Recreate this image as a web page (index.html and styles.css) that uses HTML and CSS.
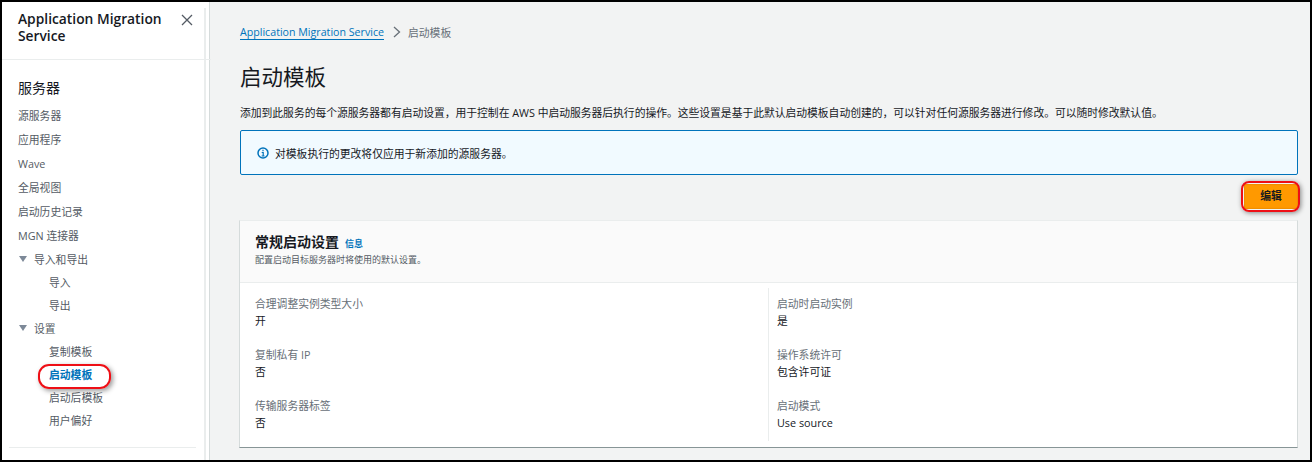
FILE: index.html
```html
<!DOCTYPE html>
<html lang="zh">
<head>
<meta charset="utf-8">
<title>启动模板</title>
<link rel="stylesheet" href="styles.css">
</head>
<body>
<div class="frame">
  <aside class="sidebar">
    <div class="side-inner">
      <header class="side-head">
        <h2 class="service">Application Migration Service</h2>
        <svg class="close" viewBox="0 0 12 12" width="12" height="12"><path d="M1 1l10 10M11 1L1 11" fill="none" stroke="#545b64" stroke-width="1.3"/></svg>
      </header>
      <nav class="nav">
        <h3 class="nav-title">服务器</h3>
        <a class="nav-item">源服务器</a>
        <a class="nav-item">应用程序</a>
        <a class="nav-item">Wave</a>
        <a class="nav-item">全局视图</a>
        <a class="nav-item">启动历史记录</a>
        <a class="nav-item">MGN 连接器</a>
        <div class="nav-group"><span class="caret"></span>导入和导出</div>
        <a class="nav-sub">导入</a>
        <a class="nav-sub">导出</a>
        <div class="nav-group"><span class="caret"></span>设置</div>
        <a class="nav-sub">复制模板</a>
        <a class="nav-sub active">启动模板</a>
        <a class="nav-sub">启动后模板</a>
        <a class="nav-sub">用户偏好</a>
      </nav>
      <div class="side-rule"></div>
    </div>
    <div class="side-track"></div>
  </aside>
  <main class="main">
    <div class="crumbs">
      <a class="crumb-link">Application Migration Service</a>
      <svg class="crumb-sep" viewBox="0 0 8 12" width="8" height="12"><path d="M1 1l5.5 5L1 11" fill="none" stroke="#687078" stroke-width="1.3"/></svg>
      <span class="crumb-current">启动模板</span>
    </div>
    <h1 class="page-title">启动模板</h1>
    <p class="lead">添加到此服务的每个源服务器都有启动设置，用于控制在 AWS 中启动服务器后执行的操作。这些设置是基于此默认启动模板自动创建的，可以针对任何源服务器进行修改。可以随时修改默认值。</p>
    <div class="alert">
      <svg class="alert-icon" viewBox="0 0 12 12" width="12" height="12"><circle cx="6" cy="6" r="5" fill="none" stroke="#0073bb" stroke-width="1.5"/><path d="M6 2.7v1.6M4.7 5.5H6.2V9M4.6 9h3" fill="none" stroke="#0073bb" stroke-width="1.2"/></svg>
      <span>对模板执行的更改将仅应用于新添加的源服务器。</span>
    </div>
    <div class="actions"><button class="edit">编辑</button></div>
    <section class="card">
      <header class="card-head">
        <div class="card-title-row"><h2 class="card-title">常规启动设置</h2><a class="info">信息</a></div>
        <p class="card-sub">配置启动目标服务器时将使用的默认设置。</p>
      </header>
      <div class="card-body">
        <div class="col">
          <div class="kv"><div class="key">合理调整实例类型大小</div><div class="val">开</div></div>
          <div class="kv"><div class="key">复制私有 IP</div><div class="val">否</div></div>
          <div class="kv"><div class="key">传输服务器标签</div><div class="val">否</div></div>
        </div>
        <div class="col col-right">
          <div class="kv"><div class="key">启动时启动实例</div><div class="val">是</div></div>
          <div class="kv"><div class="key">操作系统许可</div><div class="val">包含许可证</div></div>
          <div class="kv"><div class="key">启动模式</div><div class="val">Use source</div></div>
        </div>
      </div>
    </section>
  </main>
</div>
</body>
</html>
```
FILE: styles.css
```css
* { box-sizing: border-box; }
html, body { margin: 0; height: 100%; background: #000; overflow: hidden; }
body {
  font-family: "Open Sans", "Noto Sans CJK SC", sans-serif;
  font-size: 10.8px;
  color: #16191f;
}
.frame {
  height: 462px;
  border: 2px solid #000;
  display: flex;
  background: #f2f3f3;
  overflow: hidden;
}
.sidebar {
  width: 208px;
  flex: none;
  display: flex;
  background: #fff;
  border-right: 1px solid #d5dbdb;
}
.side-inner { width: 202px; flex: none; }
.side-track { width: 2px; margin-top: 6px; background: #eaeded; }
.side-head {
  height: 58px;
  padding: 8px 18px 0 16px;
  display: flex;
  justify-content: space-between;
  align-items: flex-start;
  margin-right: -7px;
  border-bottom: 1px solid #eaeded;
}
.service {
  margin: 0;
  width: 150px;
  font-size: 13.8px;
  line-height: 17px;
  font-weight: 600;
  color: #16191f;
}
.close { margin-top: 4px; }
.nav { padding: 17px 0 0 16px; display: flex; flex-direction: column; }
.nav-title {
  margin: 0 0 4.7px;
  height: 22px;
  line-height: 22px;
  font-size: 14px;
  font-weight: 400;
  color: #16191f;
}
.nav-item {
  height: 24px;
  line-height: 24px;
  color: #545b64;
}
.nav-group, .nav-sub { height: 23px; line-height: 23px; color: #545b64; }
.nav-group { display: flex; align-items: center; }
.caret {
  width: 0;
  height: 0;
  margin: 0 7px 0 1px;
  border: solid transparent;
  border-width: 6px 4px 0;
  border-top-color: #7d8998;
}
.nav-sub { padding-left: 31px; }
.active {
  position: relative;
  color: #0073bb;
  font-weight: 700;
}
.active::after {
  content: "";
  position: absolute;
  left: 20px;
  top: 1px;
  width: 69px;
  height: 21px;
  border: 2px solid #ee0f16;
  border-radius: 11px;
  box-shadow: 2px 2px 5px rgba(0,0,0,.4);
}
.side-rule { margin: 15px 8px 0 7px; height: 1px; background: #eaeded; }
.main { flex: 1; padding: 20px 12px 0 30px; min-width: 0; }
.crumbs { height: 20px; display: flex; align-items: center; }
.crumb-link { color: #0073bb; border-bottom: 1px solid #0073bb; line-height: 13px; font-size: 10.65px; margin-top: 2px; }
.crumb-sep { margin: 0 7px 0 9px; }
.crumb-current { color: #687078; }
.page-title {
  margin: 20px 0 0;
  font-size: 21.5px;
  line-height: 30px;
  font-weight: 400;
  color: #16191f;
}
.lead { margin: 13px 0 0; letter-spacing: -.02px; line-height: 16px; white-space: nowrap; }
.alert {
  margin-top: 9px;
  height: 45px;
  padding-left: 16px;
  display: flex;
  align-items: center;
  gap: 6px;
  background: #f1faff;
  border: 1px solid #0073bb;
  border-radius: 2px;
}
.alert-icon { flex: none; }
.actions { display: flex; justify-content: flex-end; margin-top: 9px; }
.edit {
  position: relative;
  width: 54px;
  height: 25px;
  padding: 0 0 3px;
  border: 0;
  background: #f90;
  box-shadow: inset 0 0 2px #c77700;
  font: inherit;
  font-weight: 700;
  color: #16191f;
}
.edit::after {
  content: "";
  position: absolute;
  inset: -3px -2px -3px -3px;
  border: 2px solid #ee0f16;
  border-radius: 8px;
  box-shadow: 1px 1px 5px rgba(0,0,0,.45);
}
.card {
  margin: 11px 0 0 -1px;
  height: 228px;
  background: #fff;
  border-top: 1px solid #eaeded;
  border-right: 1px solid #d5dbdb;
  border-left: 1px solid #d5dbdb;
  border-bottom: 1px solid #879596;
}
.card-head {
  height: 62px;
  padding: 11px 15px 0;
  background: #fafafa;
  border-bottom: 1px solid #eaeded;
}
.card-title-row { display: flex; align-items: baseline; gap: 6px; }
.card-title { margin: 0; font-size: 14px; line-height: 19px; font-weight: 700; }
.info { font-size: 9px; font-weight: 700; color: #0073bb; }
.card-sub { margin: 2px 0 0; font-size: 9px; line-height: 14px; color: #545b64; }
.card-body { display: flex; padding-top: 5px; }
.col { flex: 0 0 528px; height: 153px; padding-left: 15px; display: flex; flex-direction: column; }
.col-right { flex: 1; padding-left: 8px; border-left: 1px solid #eaeded; }
.kv { height: 51px; padding-top: 7px; }
.key { line-height: 17px; color: #687078; }
.val { line-height: 18px; color: #16191f; }
```
